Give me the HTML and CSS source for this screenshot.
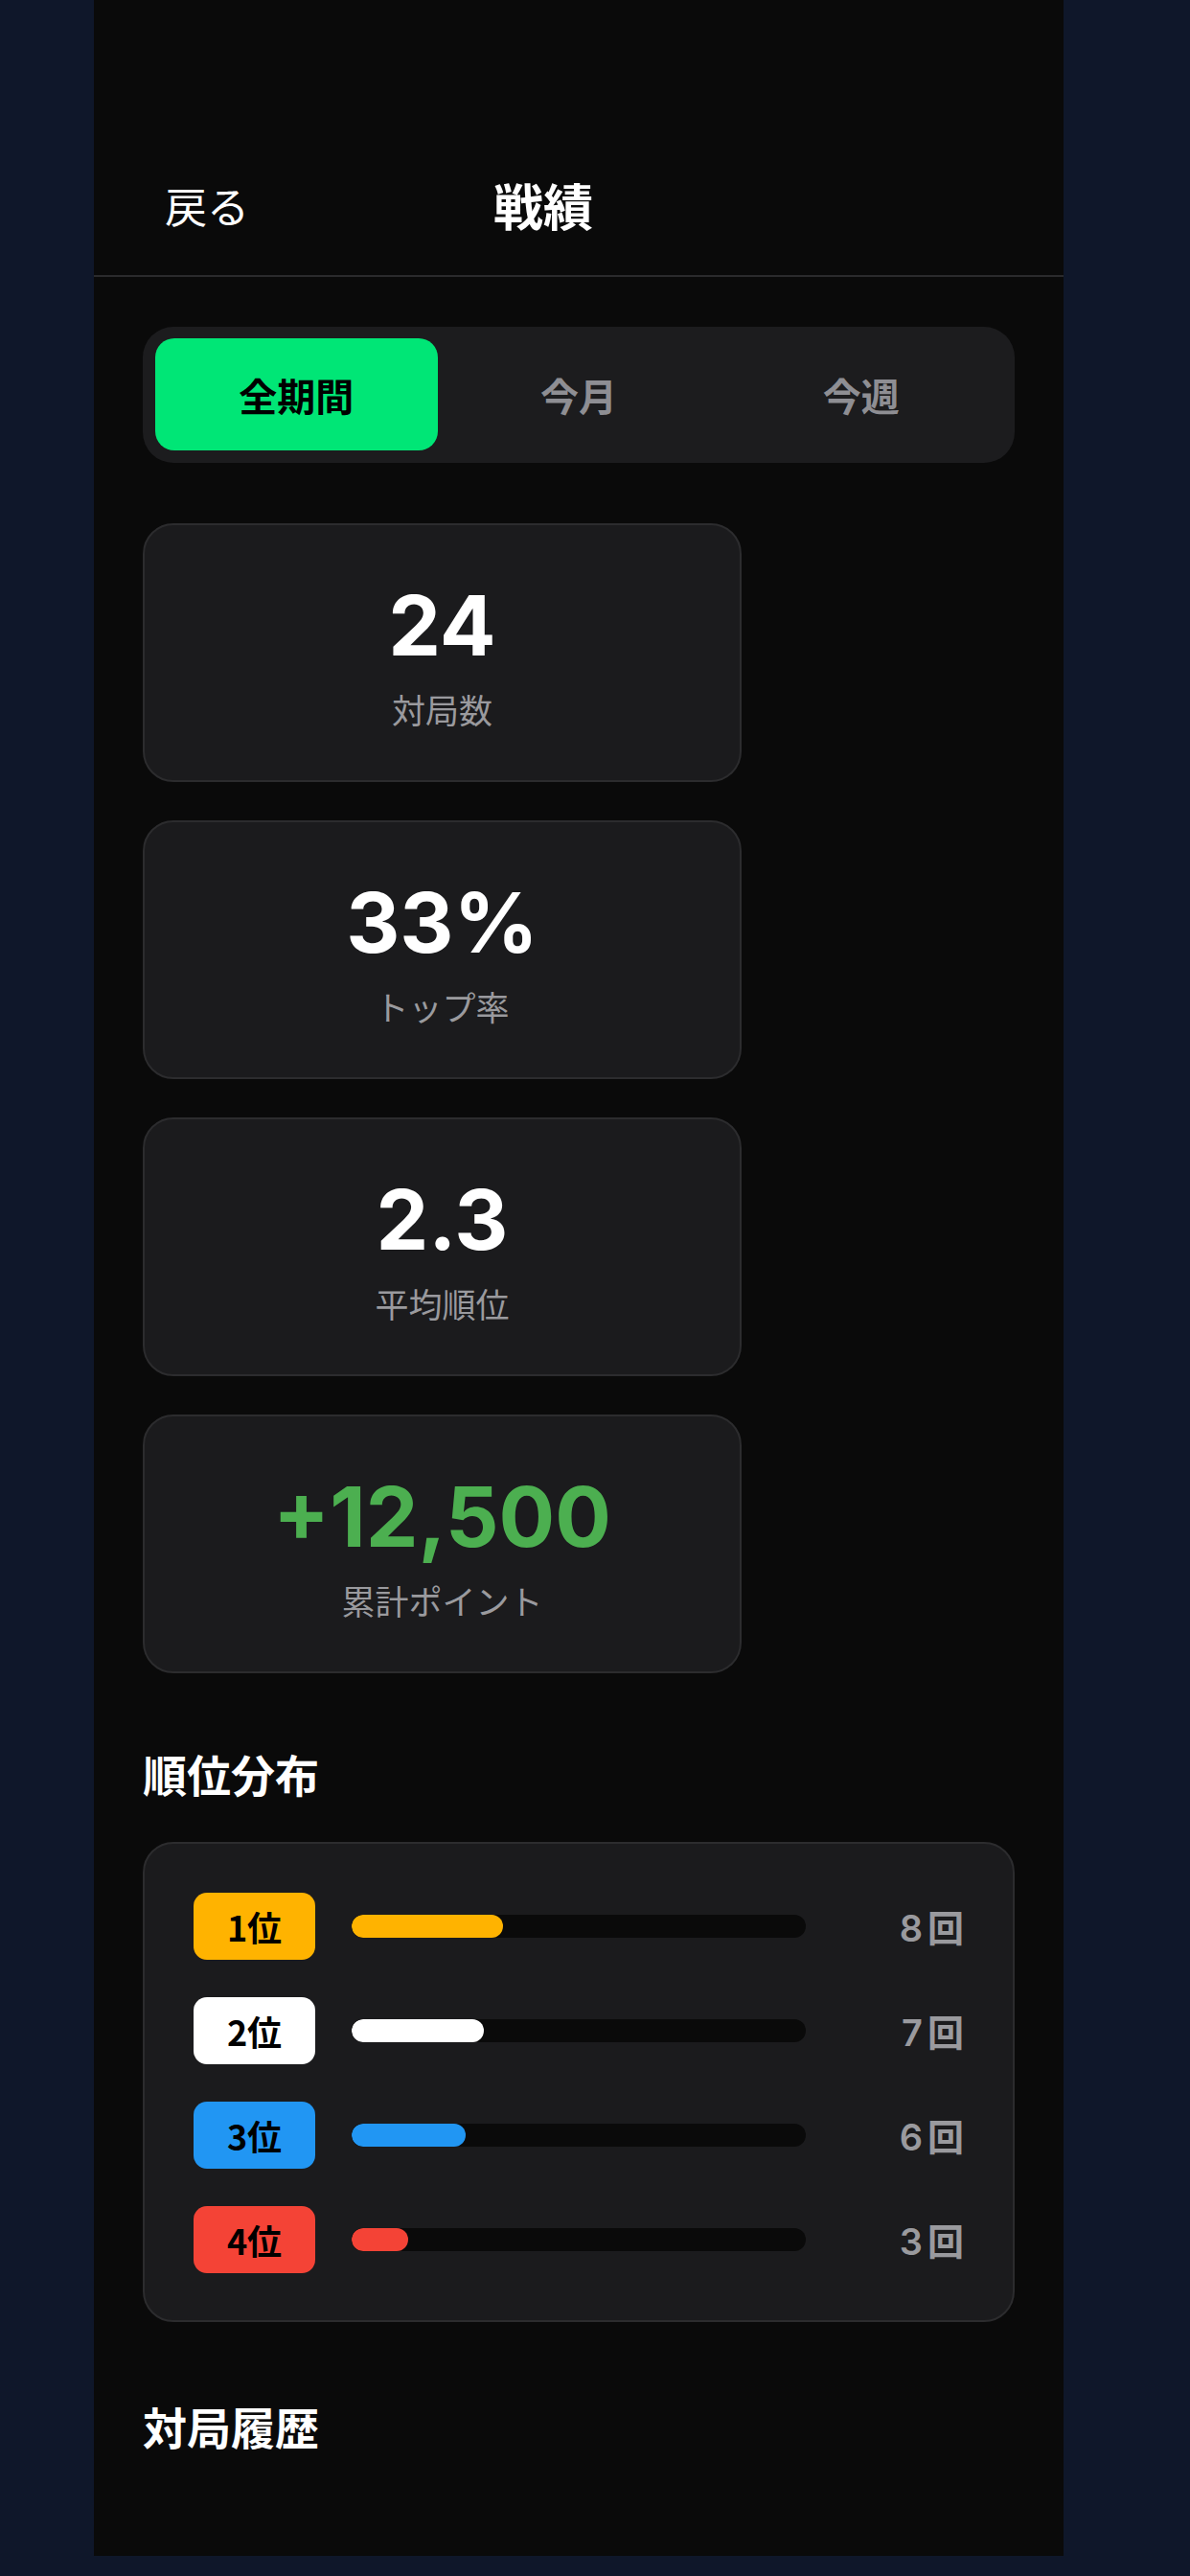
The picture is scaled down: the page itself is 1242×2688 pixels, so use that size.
FILE: index.html
```html
<!DOCTYPE html>
<html lang="ja">
<head>
<meta charset="utf-8">
<title>戦績</title>
<link rel="stylesheet" href="styles.css">
</head>
<body>
<div class="screen">
  <header class="header">
    <div class="header-row">
      <span class="back">戻る</span>
      <span class="title">戦績</span>
      <span class="spacer"></span>
    </div>
  </header>
  <main class="content">
    <div class="tabs">
      <div class="tab active">全期間</div>
      <div class="tab">今月</div>
      <div class="tab">今週</div>
    </div>

    <div class="stats">
      <div class="stat-card">
        <div class="stat-value">24</div>
        <div class="stat-label">対局数</div>
      </div>
      <div class="stat-card">
        <div class="stat-value">33%</div>
        <div class="stat-label">トップ率</div>
      </div>
      <div class="stat-card">
        <div class="stat-value">2.3</div>
        <div class="stat-label">平均順位</div>
      </div>
      <div class="stat-card">
        <div class="stat-value positive">+12,500</div>
        <div class="stat-label">累計ポイント</div>
      </div>
    </div>

    <h2 class="section-title">順位分布</h2>
    <div class="dist-card">
      <div class="dist-row">
        <span class="badge rank1">1位</span>
        <div class="track"><div class="fill rank1" style="width:33.3%"></div></div>
        <span class="count">8<span class="unit">回</span></span>
      </div>
      <div class="dist-row">
        <span class="badge rank2">2位</span>
        <div class="track"><div class="fill rank2" style="width:29.2%"></div></div>
        <span class="count">7<span class="unit">回</span></span>
      </div>
      <div class="dist-row">
        <span class="badge rank3">3位</span>
        <div class="track"><div class="fill rank3" style="width:25%"></div></div>
        <span class="count">6<span class="unit">回</span></span>
      </div>
      <div class="dist-row">
        <span class="badge rank4">4位</span>
        <div class="track"><div class="fill rank4" style="width:12.5%"></div></div>
        <span class="count">3<span class="unit">回</span></span>
      </div>
    </div>

    <h2 class="section-title history">対局履歴</h2>
  </main>
</div>
</body>
</html>
```

FILE: styles.css
```css
html, body {
  margin: 0;
  padding: 0;
}
body {
  background: #0f172a;
  width: 1242px;
  height: 2688px;
  overflow: hidden;
  font-family: "Noto Sans CJK JP", "Noto Sans", sans-serif;
  color: #ffffff;
}
.screen {
  width: 1012px;
  height: 2667px;
  margin-left: 98px;
  background: #0a0a0a;
  overflow: hidden;
}
.header {
  padding-top: 140px;
  border-bottom: 2px solid #2a2a2c;
}
.header-row {
  height: 147px;
  padding: 0 74px;
  display: flex;
  align-items: center;
  justify-content: space-between;
}
.back {
  font-size: 44px;
  line-height: 1;
  width: 88px;
  color: #ffffff;
}
.title {
  font-size: 52px;
  font-weight: 700;
  line-height: 1;
}
.spacer {
  width: 162px;
}
.content {
  padding: 52px 51px 0;
}
.tabs {
  display: flex;
  background: #1c1c1e;
  border-radius: 32px;
  padding: 12px 13px 13px;
  height: 117px;
}
.tab {
  flex: 1;
  display: flex;
  align-items: center;
  justify-content: center;
  font-size: 40px;
  font-weight: 700;
  color: #8e8e93;
  border-radius: 20px;
}
.tab.active {
  background: #00e676;
  color: #000000;
}
.stats {
  margin-top: 63px;
  display: flex;
  flex-direction: column;
  gap: 40px;
  width: 625px;
}
.stat-card {
  box-sizing: border-box;
  height: 270px;
  background: #1b1b1d;
  border: 2px solid #2c2c2e;
  border-radius: 32px;
  padding-top: 53px;
  display: flex;
  flex-direction: column;
  align-items: center;
}
.stat-value {
  font-family: Inter, "Liberation Sans", sans-serif;
  font-size: 87px;
  font-weight: 700;
  line-height: 1.2;
  color: #ffffff;
}
.stat-value.positive {
  color: #4caf50;
}
.stat-label {
  margin-top: 10px;
  font-size: 35px;
  line-height: 1.4;
  color: #9a9a9e;
}
.section-title {
  margin: 75px 0 0;
  font-size: 46px;
  font-weight: 700;
  line-height: 1.3;
}
.dist-card {
  margin-top: 41px;
  background: #1b1b1d;
  border: 2px solid #2c2c2e;
  border-radius: 32px;
  padding: 51px 51px 49px;
  display: flex;
  flex-direction: column;
  gap: 39px;
}
.dist-row {
  display: flex;
  align-items: center;
  gap: 38px;
  height: 70px;
}
.badge {
  width: 127px;
  height: 70px;
  border-radius: 14px;
  display: flex;
  align-items: center;
  justify-content: center;
  font-size: 36px;
  font-weight: 700;
  color: #000000;
  flex: none;
}
.rank1 { background: #ffb300; }
.rank2 { background: #ffffff; }
.rank3 { background: #2196f3; }
.rank4 { background: #f44336; }
.track {
  flex: 1;
  height: 24px;
  background: #0a0a0a;
  border-radius: 12px;
  overflow: hidden;
}
.fill {
  height: 100%;
  border-radius: 12px;
}
.count {
  width: 127px;
  flex: none;
  text-align: right;
  font-family: Inter, "Noto Sans CJK JP", sans-serif;
  font-size: 38px;
  font-weight: 600;
  color: #9a9a9e;
}
.unit {
  font-family: "Noto Sans CJK JP", sans-serif;
  margin-left: 5px;
}
.section-title.history {
  margin-top: 79px;
}
```
